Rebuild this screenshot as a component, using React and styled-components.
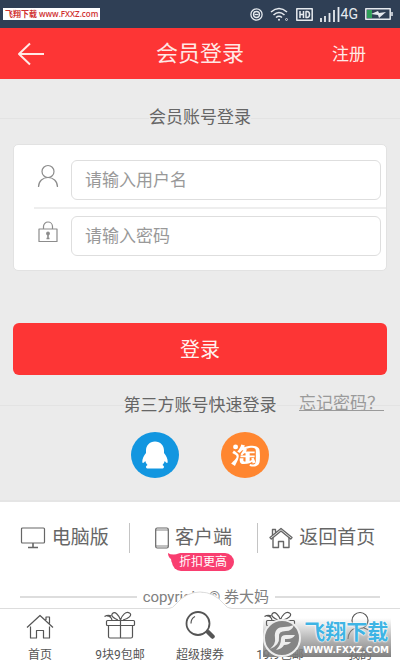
import React from "react";
import styled, { createGlobalStyle } from "styled-components";
import { AiOutlineTaobao } from "react-icons/ai";

const GlobalStyle = createGlobalStyle`
  * {
    box-sizing: border-box;
  }

  body {
    margin: 0;
    font-family: Roboto, "Noto Sans CJK SC", sans-serif;
    color: #666666;
    background-color: #ffffff;
  }

  a {
    color: inherit;
    text-decoration: none;
  }

  svg {
    display: block;
    flex: none;
  }
`;

const Page = styled.div`
  position: relative;
  min-height: 100vh;
  display: flex;
  flex-flow: column nowrap;
`;

const StatusBar = styled.div`
  height: 28px;
  padding: 0 7px 0 3px;
  display: flex;
  justify-content: flex-end;
  align-items: center;
  gap: 7px;
  background-color: #2f3f55;
  color: #e6eaef;
`;

const SourceTag = styled.span`
  margin-right: auto;
  padding: 0 2px;
  font-family: "Open Sans", "Noto Sans CJK SC", sans-serif;
  font-size: 8px;
  font-weight: 600;
  line-height: 12px;
  white-space: nowrap;
  color: #d03030;
  background-color: #ffffff;
`;

const Signal = styled.span`
  display: flex;
  align-items: center;
  gap: 1px;
  font-size: 14px;
  line-height: 16px;
`;

const Header = styled.header`
  height: 51px;
  padding: 0 34px 0 16px;
  display: grid;
  grid-template-columns: 1fr auto 1fr;
  align-items: center;
  background-color: #fd3535;
  color: #ffe9e6;
`;

const Title = styled.h1`
  margin: 0 0 0 18px;
  font-size: 22px;
  font-weight: 400;
  line-height: 32px;
`;

const BackButton = styled.button`
  justify-self: start;
  padding: 0;
  border: none;
  background: none;
  color: inherit;
`;

const HeaderLink = styled.a`
  justify-self: end;
  font-size: 17px;
  line-height: 24px;
`;

const Main = styled.main`
  padding: 25px 13px 22px;
  background-color: #ebebeb;
  border-bottom: 2px solid #e5e5e5;
`;

const SectionHead = styled.div`
  position: relative;
  margin: 0 -13px;
  padding: 0 16px;
  display: grid;
  grid-template-columns: 1fr auto 1fr;
  align-items: center;

  &::before {
    content: "";
    position: absolute;
    left: 0;
    right: 0;
    top: 14px;
    border-top: 1px solid #e3e3e3;
  }
`;

const SectionTitle = styled.h2`
  position: relative;
  grid-column: 2;
  margin: 0;
  font-size: 17px;
  font-weight: 400;
  line-height: 26px;
  background-color: #ebebeb;
`;

const ForgotLink = styled.a`
  position: relative;
  justify-self: end;
  font-size: 17px;
  line-height: 24px;
  padding-bottom: 4px;
  color: #9a9a9a;
  text-decoration: underline;
`;

const Card = styled.div`
  margin-top: 14px;
  padding: 15px 5px 14px 20px;
  border: 1px solid #e2e2e2;
  border-radius: 5px;
  background-color: #ffffff;
`;

const Field = styled.div`
  display: flex;
  align-items: center;

  & + & {
    margin-top: 7px;
    padding-top: 7px;
    border-top: 2px solid #eeeeee;
    margin-right: -5px;
    padding-right: 5px;
  }
`;

const FieldLabel = styled.label`
  flex: none;
  width: 37px;
  padding-bottom: 8px;
  padding-left: 3px;
  color: #8c8c8c;
`;

const Input = styled.input`
  flex: 1;
  min-width: 0;
  height: 40px;
  padding: 0 13px;
  border: 1px solid #dedede;
  border-radius: 6px;
  background-color: #ffffff;
  font-family: inherit;
  font-size: 17px;
  color: #666666;

  &::placeholder {
    color: #999999;
    opacity: 1;
  }
  &:focus {
    outline: none;
    border-color: #fd3535;
  }
`;

const SubmitButton = styled.button`
  display: block;
  width: 100%;
  height: 52px;
  margin: 52px 0 16px;
  padding: 0 0 2px;
  border: none;
  border-radius: 6px;
  background-color: #fd3535;
  font-family: inherit;
  font-size: 20px;
  color: #fff1ee;
`;

const Socials = styled.div`
  margin-top: 13px;
  display: flex;
  justify-content: center;
  gap: 42px;
`;

const SocialLink = styled.a`
  width: 48px;
  height: 46px;
  display: flex;
  align-items: center;
  justify-content: center;
  border-radius: 50%;
  color: #ffffff;
  background-color: ${(props) => props.$color};
`;

const Footer = styled.footer`
  flex: 1;
  padding-top: 21px;
`;

const FooterLinks = styled.nav`
  padding-right: 14px;
  display: grid;
  grid-template-columns: repeat(3, 1fr);
`;

const FooterCell = styled.div`
  height: 30px;
  display: flex;
  justify-content: center;
  align-items: center;

  & + & {
    border-left: 1px solid #c4c4c4;
  }
`;

const FooterLink = styled.a`
  position: relative;
  display: flex;
  align-items: center;
  gap: 6px;
  font-size: 19px;
  line-height: 28px;
  white-space: nowrap;
`;

const Badge = styled.span`
  position: absolute;
  top: 29px;
  left: 17px;
  padding: 0 7px;
  border-radius: 9px;
  background-color: #f93e70;
  font-size: 12px;
  line-height: 18px;
  color: #ffffff;

  svg {
    position: absolute;
    left: -4px;
    top: 0;
  }
`;

const Copyright = styled.p`
  margin: 33px 20px 0;
  display: flex;
  align-items: center;
  gap: 6px;
  font-size: 15px;
  line-height: 22px;
  white-space: nowrap;
  color: #808080;

  &::before,
  &::after {
    content: "";
    flex: 9;
    height: 2px;
    background-color: #dddddd;
  }
  &::before {
    flex: 10;
  }
`;

const TabBar = styled.nav`
  position: relative;
  height: 59px;
  display: grid;
  grid-template-columns: repeat(5, 1fr);
  border-top: 1px solid #dddddd;
  background-color: #ffffff;
`;

const Bump = styled.svg`
  position: absolute;
  top: -18px;
  left: 50%;
  transform: translateX(-50%);
`;

const Tab = styled.a`
  position: relative;
  padding-top: 2px;
  display: flex;
  flex-flow: column nowrap;
  align-items: center;
  gap: 7px;
  font-size: 12px;
  line-height: 18px;
  color: #555555;
`;

const Watermark = styled.div`
  position: absolute;
  right: 9px;
  bottom: 10px;
  height: 39px;
  padding-right: 2px;
  display: flex;
  align-items: center;
  gap: 2px;
  background: linear-gradient(#ffffff00, #999999aa 50%, #777777ee);
`;

const WatermarkText = styled.div`
  display: flex;
  flex-flow: column nowrap;
  align-items: center;
`;

const WatermarkName = styled.span`
  font-size: 21px;
  font-weight: 700;
  line-height: 24px;
  color: #3fb4e4;
  text-shadow: 0 0 1px #ffffff, 0 0 2px #ffffff, 0 0 2px #ffffff;
`;

const WatermarkUrl = styled.span`
  font-family: "DejaVu Sans", sans-serif;
  font-size: 9px;
  font-weight: 700;
  line-height: 12px;
  color: #ffffff;
`;

const Icon = function (props) {
  const { width, height, stroke = 1.2, children } = props;
  return (
    <svg
      width={width}
      height={height}
      viewBox={`0 0 ${width} ${height}`}
      fill="none"
      stroke="currentColor"
      strokeWidth={stroke}
      strokeLinejoin="round"
      aria-hidden="true"
    >
      {children}
    </svg>
  );
};

// Present box with a loose bow, used by both 包邮 tabs.
const GiftIcon = () => (
  <Icon width={32} height={28}>
    <rect x="2.500" y="9.500" width="28" height="5" rx="1" />
    <path d="M4.500 14.500V25.500q0 1.500 1.500 1.500H27q1.500 0 1.500-1.500V14.500M16.500 10v17" />
    <path d="M16.500 9C15 4 11 0 8.500 2.500S11 8 14 9M16.500 9C18 4 22 0 25.500 2S24 8 19 9" />
    <path d="M7.500 5Q4 3.500 0.500 5.500M3 5q4 0 5 4" />
  </Icon>
);

const QqIcon = () => (
  <svg width="26" height="28" viewBox="0 0 26 28" fill="currentColor" aria-hidden="true">
    <path d="M13 0.500C7.500 0.500 4 4.500 4 9.500V12C2 14.500 0 18 0.300 21c.2 1.600 1.500 1 3-1 .3 1.500 1 2.700 2.200 3.900-2 .8-2.300 3.600 1 3.600H19.500c3.300 0 3-2.800 1-3.600 1.200-1.200 1.900-2.400 2.200-3.900 1.500 2 2.800 2.600 3 1C26 18 24 14.500 22 12V9.500C22 4.500 18.500 0.500 13 0.500z" />
  </svg>
);

export default function App() {
  return (
    <Page>
      <GlobalStyle />
      <StatusBar>
        <SourceTag>飞翔下载 www.FXXZ.com</SourceTag>
        <Icon width={13} height={13} stroke={1.3}>
          <circle cx="6.500" cy="6.500" r="5.600" />
          <circle cx="6.500" cy="6.500" r="3" />
          <path d="M4.500 6.500h4" />
        </Icon>
        <Icon width={19} height={15} stroke={1.6}>
          <path d="M1 5Q9 -2 17 5M3.500 8Q9 3 14.500 8M6 10.500q3-2.500 6 0" />
          <circle cx="9" cy="12.800" r="1" fill="currentColor" stroke="none" />
          <circle cx="16.500" cy="12.500" r="1" strokeWidth="0.8" />
        </Icon>
        <Icon width={17} height={13} stroke={1.5}>
          <rect x="0.8" y="0.8" width="15.400" height="11.400" />
          <path d="M4 3v7M7.500 3v7M4 6.500h3.500M10 3.500h1q2.500 0 2.500 3t-2.500 3h-1z" />
        </Icon>
        <Signal>
          <Icon width={20} height={16} stroke={1.8}>
            <path d="M1 12v4M5 10v6M9.500 7v9M14 4v12M18.500 1v15" />
          </Icon>
          4G
        </Signal>
        <Icon width={28} height={12} stroke={1.5}>
          <rect x="0.8" y="0.8" width="24.400" height="10.400" />
          <rect x="2" y="2" width="5" height="8" fill="#2e9e58" stroke="none" />
          <path d="M27 4v4" />
          <path d="M6 6l7-3 1 2 7-1-7 6-1-3z" fill="currentColor" stroke="none" />
        </Icon>
      </StatusBar>

      <Header>
        <BackButton type="button" aria-label="返回">
          <Icon width={28} height={24} stroke={2}>
            <path d="M14 1.500 3 12l11 10.500M3 12h25" />
          </Icon>
        </BackButton>
        <Title>会员登录</Title>
        <HeaderLink href="#register">注册</HeaderLink>
      </Header>

      <Main>
        <form onSubmit={(e) => e.preventDefault()}>
          <SectionHead>
            <SectionTitle>会员账号登录</SectionTitle>
          </SectionHead>
          <Card>
            <Field>
              <FieldLabel htmlFor="username" aria-label="用户名">
                <Icon width={22} height={24}>
                  <circle cx="11" cy="7.500" r="6" />
                  <path d="M1.500 23C1.500 17 6 13.500 11 13.500S20.500 17 20.500 23" />
                </Icon>
              </FieldLabel>
              <Input id="username" type="text" placeholder="请输入用户名" />
            </Field>
            <Field>
              <FieldLabel htmlFor="password" aria-label="密码">
                <Icon width={22} height={22}>
                  <rect x="2" y="8" width="18" height="12.500" />
                  <path d="M6.500 8V5.500a4.500 4.500 0 0 1 9 0v2.500" />
                  <circle cx="11" cy="12.500" r="1.300" fill="currentColor" />
                  <path d="M11 13.500v4M9.500 17.500h3" strokeWidth="1.600" />
                </Icon>
              </FieldLabel>
              <Input id="password" type="password" placeholder="请输入密码" />
            </Field>
          </Card>
          <SubmitButton type="submit">登录</SubmitButton>
        </form>
        <SectionHead>
          <SectionTitle>第三方账号快速登录</SectionTitle>
          <ForgotLink href="#forgot">忘记密码？</ForgotLink>
        </SectionHead>
        <Socials>
          <SocialLink href="#qq" $color="#1296e0" aria-label="QQ">
            <QqIcon />
          </SocialLink>
          <SocialLink href="#taobao" $color="#ff8630" aria-label="淘宝">
            <AiOutlineTaobao size={37} />
          </SocialLink>
        </Socials>
      </Main>

      <Footer>
        <FooterLinks>
          <FooterCell>
            <FooterLink href="#pc">
              <Icon width={26} height={22}>
                <rect x="1.500" y="1" width="23" height="15" rx="1" />
                <path d="M13 16v4M8 20.500h10" strokeWidth="1.600" />
              </Icon>
              电脑版
            </FooterLink>
          </FooterCell>
          <FooterCell>
            <FooterLink href="#client">
              <Icon width={14} height={22}>
                <rect x="0.700" y="1" width="12.600" height="20" rx="1.500" />
                <path d="M1 3h12M1 19h12" strokeWidth="0.800" />
              </Icon>
              客户端
              <Badge>
                <svg width="14" height="12" viewBox="0 0 14 12" fill="#f93e70" aria-hidden="true">
                  <path d="M0 0q4 3 14 0L10 12Q3 12 3 6Q0 4 0 0z" />
                </svg>
                折扣更高
              </Badge>
            </FooterLink>
          </FooterCell>
          <FooterCell>
            <FooterLink href="#home">
              <Icon width={24} height={22} stroke={1.4}>
                <path d="M4 10.500V20.500H9.500V14.500h5V20.500H20V10.500" />
                <path d="M1 10.500 12 1.500l11 9-1.300 1.500L12 4 2.300 12zM3.500 8V2.500h3V5.500" />
              </Icon>
              返回首页
            </FooterLink>
          </FooterCell>
        </FooterLinks>
        <Copyright>copyright © 券大妈</Copyright>
      </Footer>

      <TabBar>
        <Bump width="64" height="30" viewBox="0 0 64 30" aria-hidden="true">
          <path d="M0 17.500Q5 17.500 8 13Q18 1 32 1T56 13Q59 17.500 64 17.500V30H0z" fill="#ffffff" />
          <path d="M0 17.500Q5 17.500 8 13Q18 1 32 1T56 13Q59 17.500 64 17.500" fill="none" stroke="#dddddd" />
        </Bump>
        <Tab href="#index">
          <Icon width={28} height={28}>
            <path d="M1 16.500 14 4.500l13 12M20 9V6h3.500v6.500M4.500 15.500v11.500h6v-7.500h7v7.500h6V15.500" />
          </Icon>
          首页
        </Tab>
        <Tab href="#nine">
          <GiftIcon />
          9块9包邮
        </Tab>
        <Tab href="#search">
          <Icon width={32} height={28} stroke={1.8}>
            <circle cx="14" cy="12.500" r="11.500" />
            <path d="M7 12.500q0-5 4-7" strokeWidth="1.200" />
            <path d="m22 20 1.500 1.500" />
            <path d="m24.500 21.500 4 4" strokeWidth="4.500" strokeLinecap="round" />
          </Icon>
          超级搜券
        </Tab>
        <Tab href="#nineteen">
          <GiftIcon />
          19.9包邮
        </Tab>
        <Tab href="#mine">
          <Icon width={32} height={28}>
            <circle cx="16" cy="9.500" r="8" />
            <path d="M4 28Q4.500 19 12 17M28 28Q27.500 19 20 17" />
          </Icon>
          我的
        </Tab>
      </TabBar>

      <Watermark>
        <svg width="38" height="38" viewBox="0 0 38 38" aria-hidden="true">
          <circle cx="19" cy="19" r="18" fill="#858585" stroke="#eeeeee" strokeWidth="2" />
          <path d="M7 30Q13 25 12 19C11 11 15 8 21 8Q26 8 31 6Q29 12 23 12Q15 12 16 18Q17 26 7 30z" fill="#eeeeee" />
          <path d="M13 31Q18 26 18 20Q18 16 23 16H32Q30 20 24 20H22V23H28Q26 26 21 26Q19 30 13 31z" fill="#eeeeee" />
        </svg>
        <WatermarkText>
          <WatermarkName>飞翔下载</WatermarkName>
          <WatermarkUrl>WWW.FXXZ.COM</WatermarkUrl>
        </WatermarkText>
      </Watermark>
    </Page>
  );
}
